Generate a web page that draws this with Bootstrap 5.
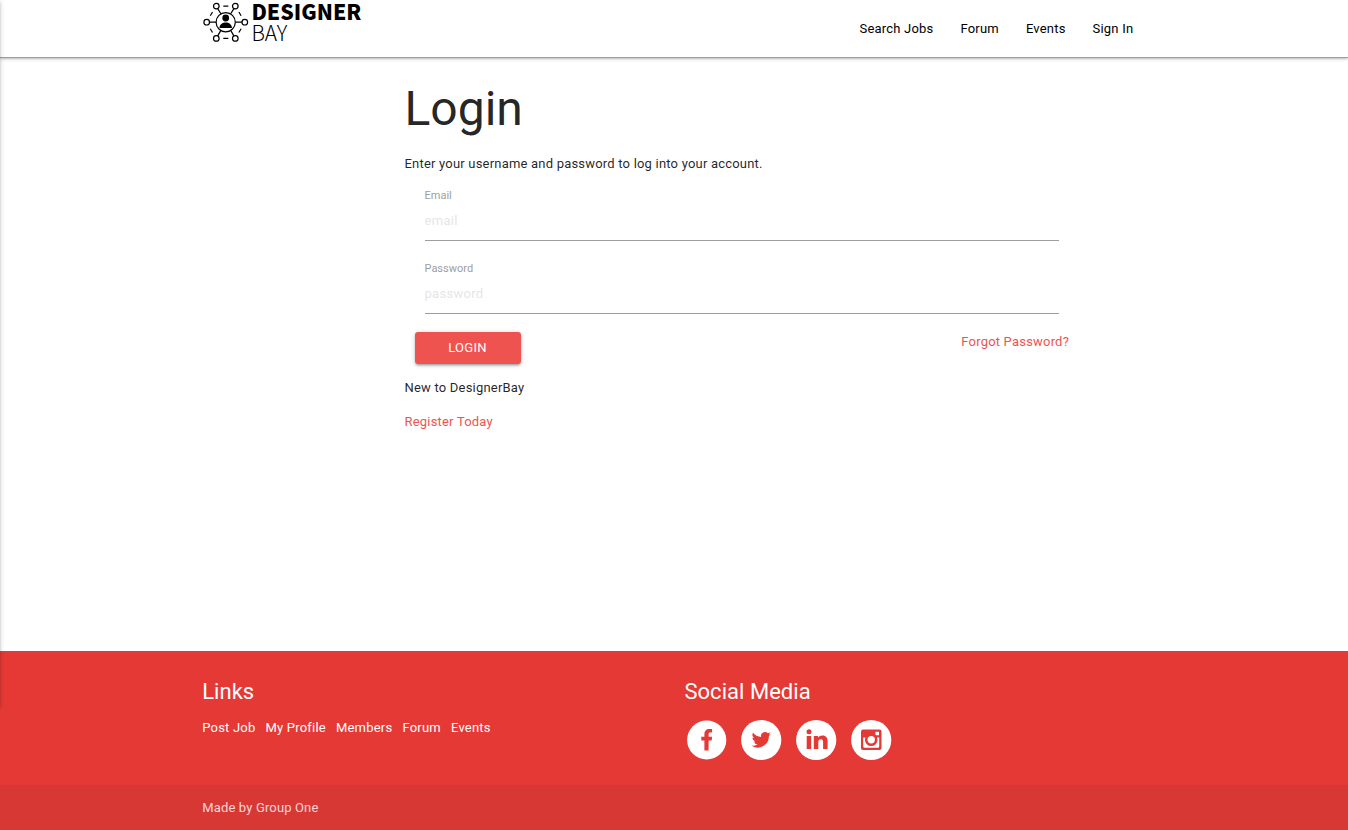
<!DOCTYPE html>
<html lang="en">
<head>
<meta charset="utf-8">
<meta name="viewport" content="width=device-width, initial-scale=1">
<title>DesignerBay - Login</title>
<link href="https://cdn.jsdelivr.net/npm/bootstrap@5.3.0/dist/css/bootstrap.min.css" rel="stylesheet">
<style>
body{font-family:Roboto,"Liberation Sans",sans-serif;font-size:13px;line-height:19.5px;letter-spacing:.2px;color:rgba(0,0,0,.87);height:830px;overflow:hidden}
a{text-decoration:none;color:#ef5350}
.wrap{width:70%;margin:0 auto}
.topbar{height:57px;background:#fff;box-shadow:0 1px 0 #9e9e9e,0 2px 2px 0 rgba(0,0,0,.14),0 3px 1px -2px rgba(0,0,0,.12),0 1px 5px 0 rgba(0,0,0,.2)}
.topbar .nav-link{padding:0 13.5px;line-height:57px;color:#000}
.topbar .nav{margin-right:-1px}
.drawer-edge{position:fixed;left:-20px;top:0;width:20px;height:706px;z-index:20;box-shadow:0 2px 2px 0 rgba(0,0,0,.14),0 3px 1px -2px rgba(0,0,0,.12),0 1px 5px 0 rgba(0,0,0,.2)}
.login{margin-left:404.5px;width:674.5px}
.login h1{font-size:48px;line-height:52px;font-weight:400;letter-spacing:0;margin:26px 0 19px;color:rgba(0,0,0,.87)}
.lead-in{margin-bottom:15px}
.field label{display:block;font-size:11px;line-height:14px;letter-spacing:0;color:#9e9e9e}
.field{margin:0 20px 21px}
.field .form-control{border:0;border-bottom:1px solid #9e9e9e;border-radius:0;padding:0 0 1px;height:38px;font-size:13px;letter-spacing:.3px;background:none}
#pw{padding-bottom:2px}
.field .form-control::placeholder{color:#e6e6e6;opacity:1}
.actions{margin:-3px 10px 14px}
.btn-login{--bs-btn-color:#fff;--bs-btn-bg:#ef5350;width:106px;height:32px;padding:0;border:0;border-radius:3px;font-size:13px;letter-spacing:.25px;box-shadow:0 2px 2px 0 rgba(0,0,0,.14),0 3px 1px -2px rgba(0,0,0,.12),0 1px 5px 0 rgba(0,0,0,.2)}
.new{margin-bottom:14.5px}
.foot{background:#e53935;color:#fff;height:179px}
.foot-main{height:134px;padding-top:29px}
.foot h2{font-size:22px;line-height:24px;font-weight:400;letter-spacing:.04px;margin:0}
.foot a{color:#fff}
.foot-links{margin-top:14px}
.foot-links a{margin-right:10.1px}
.foot-col{flex:0 0 482.2px}
.foot-base{height:45px;line-height:45px;letter-spacing:.15px;background:rgba(51,51,51,.08);color:rgba(255,255,255,.8)}
.social svg{margin-top:14px}
</style>
</head>
<body class="d-flex flex-column">
<div class="drawer-edge"></div>
<nav class="topbar flex-shrink-0">
<div class="wrap d-flex justify-content-between">
<a href="#" aria-label="Designer Bay">
<svg width="166" height="46" viewBox="202.2 0 166 46" class="d-block overflow-visible">
<g fill="none" stroke="#000" stroke-width="1.2">
<circle cx="225.9" cy="22.2" r="9.6"/>
<circle cx="206.9" cy="22.2" r="2.8"/><circle cx="245" cy="22.2" r="2.8"/>
<circle cx="216.5" cy="6.1" r="2.8"/><circle cx="235.5" cy="6.1" r="2.8"/>
<circle cx="216.5" cy="38.4" r="2.8"/><circle cx="235.5" cy="38.4" r="2.8"/>
<path d="M209.7 22.2h6.6M235.5 22.2h6.7M217.900 8.600l3.200 5.200M234.100 8.600l-3.200 5.200M217.900 35.900l3.200-5.500M234.100 35.900l-3.200-5.500M223.500 6.100h5M223.500 38.400h5M210.500 15.800l2.200-3.800M241.300 15.800l-2.200-3.800M210.500 28.700l2.200 3.800M241.300 28.700l-2.200 3.800"/>
</g>
<circle cx="225.9" cy="18" r="3.4"/><path d="M219.700 28.100c-.3-7.600 12.700-7.600 12.400 0z"/>
<text x="251.6" y="19.8" font-family="'Noto Sans CJK JP',sans-serif" font-weight="900" font-size="21.5" letter-spacing="0" textLength="110" lengthAdjust="spacingAndGlyphs">DESIGNER</text>
<text x="251.600" y="41.200" font-family="'Noto Sans CJK JP',sans-serif" font-weight="200" font-size="21.500" letter-spacing="0" textLength="36" lengthAdjust="spacingAndGlyphs">BAY</text>
</svg></a>
<div class="nav flex-nowrap">
<a class="nav-link" href="#">Search Jobs</a><a class="nav-link" href="#">Forum</a><a class="nav-link" href="#">Events</a><a class="nav-link" href="#">Sign In</a>
</div>
</div>
</nav>
<main class="login flex-grow-1">
<h1>Login</h1>
<p class="lead-in">Enter your username and password to log into your account.</p>
<form>
<div class="field"><label for="em">Email</label><input id="em" class="form-control" type="email" placeholder="email"></div>
<div class="field"><label for="pw">Password</label><input id="pw" class="form-control" type="password" placeholder="password"></div>
<div class="d-flex justify-content-between actions"><button type="button" class="btn btn-login">LOGIN</button><a href="#">Forgot Password?</a></div>
</form>
<p class="new">New to DesignerBay</p>
<a href="#">Register Today</a>
</main>
<footer class="foot flex-shrink-0">
<div class="foot-main"><div class="wrap d-flex">
<div class="foot-col"><h2>Links</h2><div class="foot-links d-flex"><a href="#">Post Job</a><a href="#">My Profile</a><a href="#">Members</a><a href="#">Forum</a><a href="#">Events</a></div></div>
<div class="social"><h2>Social Media</h2>
<svg width="210" height="44" viewBox="684 718 210 44" class="d-block" role="img" aria-label="Facebook, Twitter, LinkedIn, Instagram">
<g fill="#fff"><circle cx="706.7" cy="740" r="19.6"/><circle cx="761.2" cy="740" r="20.1"/><circle cx="816.2" cy="740" r="20.1"/><circle cx="871.2" cy="740" r="20.1"/></g>
<g fill="#e53935">
<path d="M704.4 750.6v-10.2h-3.100v-3.600h3.100v-2.300c0-3.800 1.700-5.600 5.200-5.600h2.500v3.600h-1.600c-1.500 0-1.900.6-1.900 1.900v2.400h3.500l-.4 3.600h-3.100v10.200z"/>
<path transform="translate(751.7 730.2) scale(.8)" d="M24 4.6a10 10 0 0 1-2.8.8 5 5 0 0 0 2.1-2.7 10 10 0 0 1-3.1 1.2 4.9 4.9 0 0 0-8.4 4.5A14 14 0 0 1 1.7 3.1a4.9 4.9 0 0 0 1.5 6.6 5 5 0 0 1-2.2-.6 4.9 4.9 0 0 0 3.9 4.9 5 5 0 0 1-2.2.1 4.9 4.9 0 0 0 4.6 3.4A10 10 0 0 1 0 19.5 14 14 0 0 0 21.5 7.1 10 10 0 0 0 24 4.6z"/>
<circle cx="809" cy="731.7" r="2.5"/><path d="M806.7 736h4.5v13h-4.5zM813.8 736h4.3v1.8c1-1.5 2.3-2.2 4.3-2.2 3.7 0 5.2 2.3 5.2 6v7.4h-4.5v-6.8c0-2-.6-3-2.2-3-1.8 0-2.6 1.2-2.6 3v6.8h-4.5z"/>
<rect x="861" y="729.5" width="20.5" height="20.5" rx="2"/></g>
<g fill="#fff"><path d="M863.2 737.5h3v2.400a5 5 0 0 0 10 0v-2.400h3v8.700q0 1.500-1.500 1.500h-13q-1.500 0-1.500-1.500z"/><rect x="875.5" y="731.8" width="3.5" height="3.5" rx=".5"/></g>
<circle cx="871.2" cy="739.700" r="5" fill="#fff" stroke="#e53935" stroke-width="2.600"/>
</svg></div>
</div></div>
<div class="foot-base"><div class="wrap">Made by Group One</div></div>
</footer>
<script src="https://cdn.jsdelivr.net/npm/bootstrap@5.3.0/dist/js/bootstrap.bundle.min.js"></script>
</body>
</html>
